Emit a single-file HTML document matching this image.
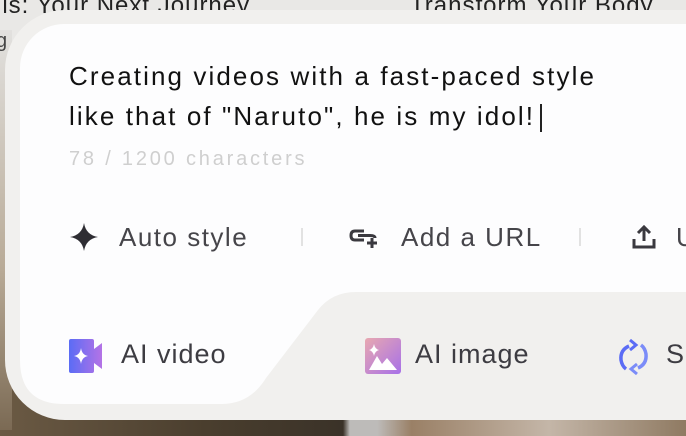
<!DOCTYPE html>
<html><head><meta charset="utf-8"><style>
*{margin:0;padding:0;box-sizing:border-box}
body{width:686px;height:436px;overflow:hidden;position:relative;background:#e9e8e6;font-family:"Liberation Sans",sans-serif}
.photo{position:absolute;left:0;top:380px;width:686px;height:56px;background:linear-gradient(90deg,#6b5a44 0%,#4a3e2e 30%,#3a3228 50%,#bdbbb9 51%,#bdbbb9 55%,#9a8066 60%,#c4b6a8 80%,#8f7a62 100%)}
.leftstrip{position:absolute;left:0;top:30px;width:12px;height:400px;background:linear-gradient(#e2e1df,#b8aa96 60%,#7b6a54)}
.toptext{position:absolute;top:-8px;font-size:24px;color:#222;letter-spacing:1px}
.outer{position:absolute;left:5px;top:10px;width:720px;height:410px;background:#f1f0ee;border-radius:60px 0 0 60px}
.inner{position:absolute;left:20px;top:24px;width:700px;height:268px;background:#fdfdfe;border-radius:44px 0 0 0}
svg.tab{position:absolute;left:0;top:0}
.t{position:absolute;left:69px;font-size:26px;color:#111;letter-spacing:2.1px;white-space:nowrap}
.cnt{position:absolute;left:69px;top:148px;font-size:20px;color:#cfcfcf;letter-spacing:2.8px}
.tool{position:absolute;top:222px;font-size:26px;color:#46454a;letter-spacing:1.5px;white-space:nowrap}
.sep{position:absolute;top:228px;width:2px;height:18px;background:#e2e2e2}
.bt{position:absolute;top:339px;font-size:27px;color:#3d3c42;letter-spacing:1px;white-space:nowrap}
</style></head><body>
<div class="photo"></div>
<div class="leftstrip"></div>
<div class="toptext" style="left:-4px">lls: Your Next Journey</div>
<div class="toptext" style="left:410px">Transform Your Body</div>
<div class="toptext" style="left:-4px;top:30px;font-size:20px;color:#444">g</div>
<div class="outer"></div>
<div class="inner"></div>
<svg class="tab" width="686" height="436">
<path d="M20 292 L20 360 Q20 404 64 404 L222 404 Q250 404 266 378 L318 310 Q332 292 356 292 L686 292 L686 250 L20 250 Z" fill="#fdfdfe"/>
</svg>
<div class="t" style="top:61px">Creating videos with a fast-paced style</div>
<div class="t" style="top:101px">like that of "Naruto", he is my idol!</div>
<div style="position:absolute;left:540px;top:104px;width:2px;height:28px;background:#222"></div>
<div class="cnt">78 / 1200 characters</div>

<svg style="position:absolute;left:69px;top:222px" width="30" height="30" viewBox="0 0 30 30"><path d="M15 1 Q17 13 29 15 Q17 17 15 29 Q13 17 1 15 Q13 13 15 1Z" fill="#2e2d33"/></svg>
<div class="tool" style="left:119px">Auto style</div>
<div class="sep" style="left:301px"></div>
<svg style="position:absolute;left:348px;top:226px" width="34" height="26" viewBox="0 0 34 26"><path d="M16 5 H7 Q3 5 3 9.5 Q3 14 7 14 H16" fill="none" stroke="#3a393f" stroke-width="3"/><path d="M10 9.5 H22 Q27 9.5 27 12" fill="none" stroke="#3a393f" stroke-width="3"/><path d="M24 12 V22 M19 17 H29" stroke="#3a393f" stroke-width="3"/></svg>
<div class="tool" style="left:401px">Add a URL</div>
<div class="sep" style="left:579px"></div>
<svg style="position:absolute;left:630px;top:223px" width="28" height="28" viewBox="0 0 28 28"><path d="M14 18 V4 M8 10 L14 4 L20 10 M4 16 V24 H24 V16" fill="none" stroke="#3a393f" stroke-width="3"/></svg>
<div class="tool" style="left:676px">U</div>

<svg style="position:absolute;left:69px;top:339px" width="34" height="34" viewBox="0 0 34 34"><defs><linearGradient id="g1" x1="0" x2="1"><stop offset="0" stop-color="#5b6cf5"/><stop offset="1" stop-color="#b473e6"/></linearGradient></defs><path d="M2 0 H23 Q25 0 25 2 V10 L33 4 V30 L25 24 V32 Q25 34 23 34 H2 Q0 34 0 32 V2 Q0 0 2 0Z" fill="url(#g1)"/><path d="M12 9 Q13 16 19 17 Q13 18 12 25 Q11 18 5 17 Q11 16 12 9Z" fill="#fff"/></svg>
<div class="bt" style="left:121px">AI video</div>
<svg style="position:absolute;left:365px;top:338px" width="36" height="36" viewBox="0 0 36 36"><defs><linearGradient id="g2" x1="0" y1="0" x2="1" y2="1"><stop offset="0" stop-color="#e8a8b0"/><stop offset="1" stop-color="#a770e8"/></linearGradient></defs><rect width="36" height="36" rx="3" fill="url(#g2)"/><path d="M9 6 Q10 11 14 12 Q10 13 9 18 Q8 13 4 12 Q8 11 9 6Z" fill="#fff"/><path d="M4 32 L12 18 L17 26 L22 20 L32 32Z" fill="#fff"/></svg>
<div class="bt" style="left:415px">AI image</div>
<svg style="position:absolute;left:616px;top:336px" width="36" height="42" viewBox="0 0 36 42"><path d="M13 10 Q4 14 5 24 Q6 30 10 33" fill="none" stroke="#5b6cf5" stroke-width="3.5"/><path d="M14 4 L20 9 L14 14" fill="none" stroke="#5b6cf5" stroke-width="3"/><path d="M22 32 Q31 28 30 18 Q29 12 25 9" fill="none" stroke="#7b8cf8" stroke-width="3.5"/><path d="M21 38 L15 33 L21 28" fill="none" stroke="#7b8cf8" stroke-width="3"/></svg>
<div class="bt" style="left:666px">S</div>
</body></html>
